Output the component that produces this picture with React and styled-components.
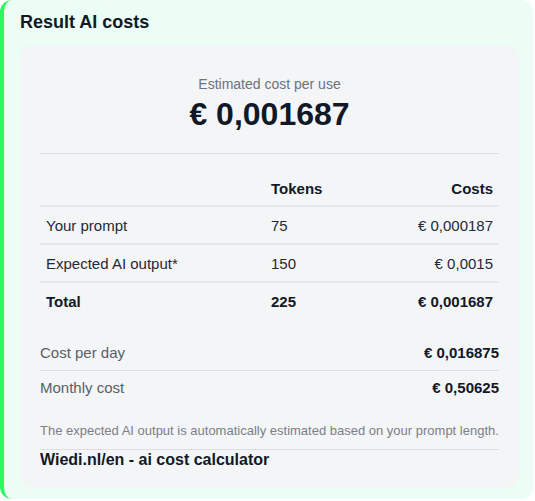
import styled, { createGlobalStyle } from "styled-components";

const GlobalStyles = createGlobalStyle`
  html, body {
    margin: 0;
    padding: 0;
    background: #ffffff;
    font-family: "Liberation Sans", Arial, sans-serif;
  }
`;

const Card = styled.section`
  box-sizing: border-box;
  width: 533px;
  height: 499px;
  background: #ecfdf5;
  border-left: 4px solid #2cf864;
  border-radius: 12px;
  padding: 11px 14px 12px 16px;
`;

const Title = styled.h2`
  margin: 0 0 11px;
  font-size: 18px;
  line-height: 23px;
  font-weight: 700;
  color: #111827;
`;

const Panel = styled.div`
  background: #f4f5f7;
  border-radius: 12px;
  padding: 29px 20px 17px;
`;

const Summary = styled.div`
  text-align: center;
  padding-bottom: 19px;
  border-bottom: 1px solid #dcdee3;
`;

const Caption = styled.div`
  font-size: 14px;
  line-height: 20px;
  color: #6b7280;
`;

const BigValue = styled.div`
  font-size: 32px;
  line-height: 40px;
  font-weight: 700;
  color: #111827;
`;

const Table = styled.table`
  width: 100%;
  margin-top: 16px;
  border-collapse: collapse;
  table-layout: fixed;
  font-size: 15px;
  color: #1f2937;
`;

const Col = styled.col`
  width: ${(p) => p.$w};
`;

const Cell = styled.td`
  padding: 10px 6px ${(p) => (p.$last ? "7px" : "8px")};
  line-height: 18px;
  border-bottom: ${(p) => (p.$last ? "none" : "2px solid #e5e7eb")};
  text-align: ${(p) => (p.$right ? "right" : "left")};
  font-weight: ${(p) => (p.$bold ? 700 : 400)};
  color: ${(p) => (p.$bold ? "#111827" : "#1f2937")};
`;

const HeadCell = styled(Cell).attrs({ as: "th" })`
  padding-top: 10px;
  padding-bottom: 7px;
`;

const Totals = styled.div`
  margin-top: 18px;
`;

const TotalRow = styled.div`
  display: flex;
  justify-content: space-between;
  align-items: center;
  padding: 8px 0;
  line-height: 18px;
  font-size: 15px;
  border-bottom: ${(p) => (p.$last ? "none" : "1px solid #dcdee3")};
`;

const TotalLabel = styled.span`
  color: #585e69;
`;

const TotalValue = styled.span`
  font-weight: 700;
  color: #111827;
`;

const Note = styled.p`
  margin: 18px 0 0;
  padding-bottom: 10px;
  font-size: 13px;
  line-height: 16px;
  color: #7a7f88;
  border-bottom: 1px solid #dcdee3;
`;

const Footer = styled.div`
  margin-top: 0;
  font-size: 16px;
  line-height: 20px;
  font-weight: 700;
  color: #111827;
`;

const rows = [
  { label: "Your prompt", tokens: "75", cost: "€ 0,000187" },
  { label: "Expected AI output*", tokens: "150", cost: "€ 0,0015" },
];

function App() {
  return (
    <>
      <GlobalStyles />
      <Card>
        <Title>Result AI costs</Title>
        <Panel>
          <Summary>
            <Caption>Estimated cost per use</Caption>
            <BigValue>€ 0,001687</BigValue>
          </Summary>
          <Table>
            <colgroup>
              <Col $w="225px" />
              <Col $w="98px" />
              <Col $w="auto" />
            </colgroup>
            <thead>
              <tr>
                <HeadCell></HeadCell>
                <HeadCell $bold>Tokens</HeadCell>
                <HeadCell $bold $right>Costs</HeadCell>
              </tr>
            </thead>
            <tbody>
              {rows.map((r) => (
                <tr key={r.label}>
                  <Cell>{r.label}</Cell>
                  <Cell>{r.tokens}</Cell>
                  <Cell $right>{r.cost}</Cell>
                </tr>
              ))}
              <tr>
                <Cell $bold $last>Total</Cell>
                <Cell $bold $last>225</Cell>
                <Cell $bold $last $right>€ 0,001687</Cell>
              </tr>
            </tbody>
          </Table>
          <Totals>
            <TotalRow>
              <TotalLabel>Cost per day</TotalLabel>
              <TotalValue>€ 0,016875</TotalValue>
            </TotalRow>
            <TotalRow $last>
              <TotalLabel>Monthly cost</TotalLabel>
              <TotalValue>€ 0,50625</TotalValue>
            </TotalRow>
          </Totals>
          <Note>
            The expected AI output is automatically estimated based on your
            prompt length.
          </Note>
          <Footer>Wiedi.nl/en - ai cost calculator</Footer>
        </Panel>
      </Card>
    </>
  );
}

export default App;
